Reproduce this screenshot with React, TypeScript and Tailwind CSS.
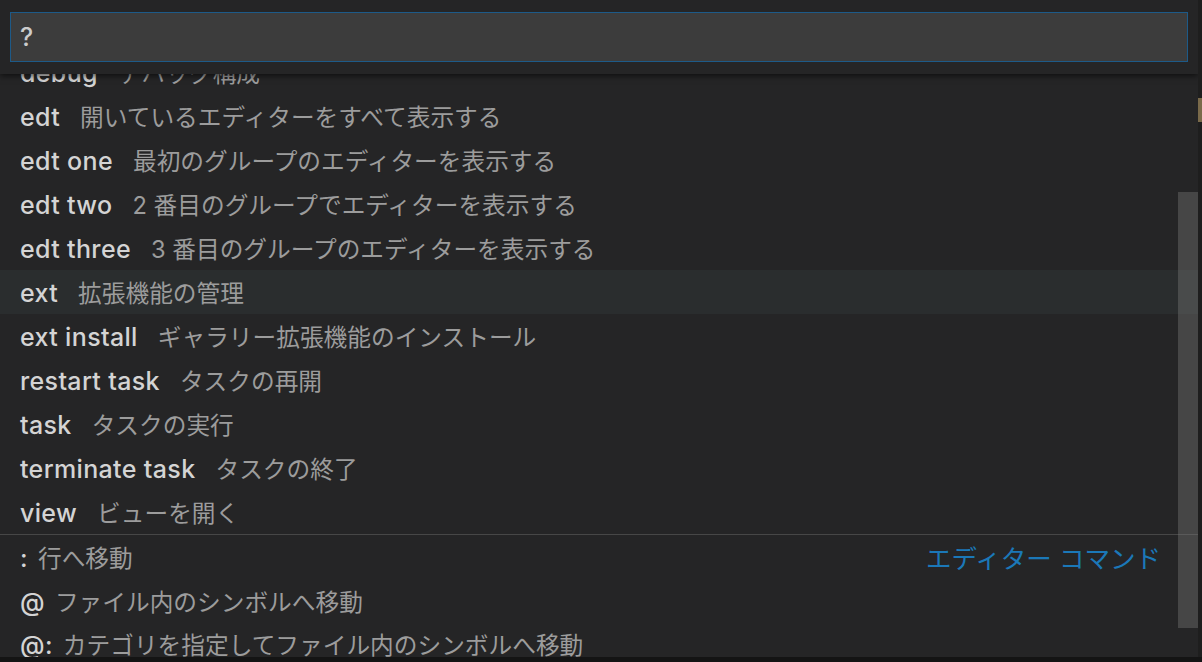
import React from "react";

type Row = { label: string; desc: string; active?: boolean };

const rows: Row[] = [
  { label: "debug", desc: "デバッグ構成" },
  { label: "edt", desc: "開いているエディターをすべて表示する" },
  { label: "edt one", desc: "最初のグループのエディターを表示する" },
  { label: "edt two", desc: "2 番目のグループでエディターを表示する" },
  { label: "edt three", desc: "3 番目のグループのエディターを表示する" },
  { label: "ext", desc: "拡張機能の管理", active: true },
  { label: "ext install", desc: "ギャラリー拡張機能のインストール" },
  { label: "restart task", desc: "タスクの再開" },
  { label: "task", desc: "タスクの実行" },
  { label: "terminate task", desc: "タスクの終了" },
  { label: "view", desc: "ビューを開く" },
];

const editorRows: Row[] = [
  { label: ":", desc: "行へ移動" },
  { label: "@", desc: "ファイル内のシンボルへ移動" },
  { label: "@:", desc: "カテゴリを指定してファイル内のシンボルへ移動" },
];

function Item({ row, editor, border, right }: { row: Row; editor?: boolean; border?: boolean; right?: string }) {
  return (
    <div
      className={
        "flex shrink-0 items-center pl-[20px] pr-[37px] pt-[3px] " +
        (row.active ? "bg-[#2a2d2e] " : "") +
        (border ? "h-[46px] border-t border-[#474747] " : editor ? "h-[43px] " : "h-[44px] ")
      }
    >
      <span className="whitespace-nowrap text-[25px] font-medium tracking-[0.35px] text-[#d4d4d4]">{row.label}</span>
      <span
        className={
          (editor ? "ml-[10px] " : "ml-[20px] ") + "whitespace-nowrap text-[23.7px] text-[#9c9c9c]"
        }
      >
        {row.desc}
      </span>
      {right && <span className="ml-auto whitespace-nowrap text-[25.5px] text-[#1b78b8]">{right}</span>}
    </div>
  );
}

export default function App() {
  return (
    <div
      className="flex h-[662px] w-[1202px] overflow-hidden bg-[#141414]"
      style={{ fontFamily: 'Inter, "Noto Sans CJK JP", sans-serif' }}
    >
      <div className="flex h-[657px] w-[1198px] flex-col overflow-hidden bg-[#252526]">
        <div className="relative z-10 h-[74px] shrink-0 bg-[#252526] px-[10px] pt-[12px] shadow-[0_2px_6px_rgba(0,0,0,0.6)]">
          <div className="flex h-[50px] items-center border border-[#1d5a88] bg-[#3c3c3c] pl-[9px] pt-[2px]">
            <span className="text-[25px] font-medium text-[#cccccc]">?</span>
          </div>
        </div>
        <div className="relative flex-1 overflow-hidden">
          <div className="mt-[-24px] flex flex-col">
            {rows.map((r) => (
              <Item key={r.label} row={r} />
            ))}
            {editorRows.map((r, i) => (
              <Item
                key={r.label}
                row={r}
                editor
                border={i === 0}
                right={i === 0 ? "エディター コマンド" : undefined}
              />
            ))}
          </div>
          <div className="absolute right-0 top-[118px] h-[436px] w-[20px] bg-[rgba(121,121,121,0.4)]" />
        </div>
      </div>
      <div className="flex h-[657px] flex-1 flex-col bg-[#1e1e1e]">
        <div className="mt-[98px] h-[24px] w-full bg-[#7a6a4a]" />
      </div>
    </div>
  );
}
